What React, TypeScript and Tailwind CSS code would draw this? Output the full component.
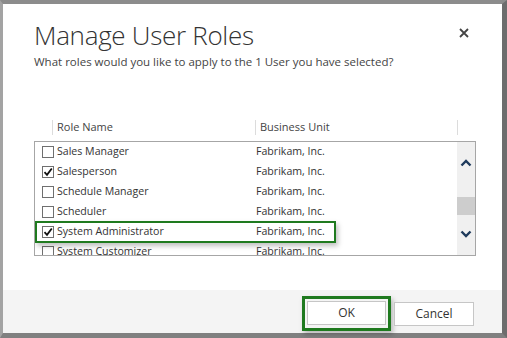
import React from 'react';

const rows = [
    { name: 'Sales Manager', unit: 'Fabrikam, Inc.', checked: false },
    { name: 'Salesperson', unit: 'Fabrikam, Inc.', checked: true },
    { name: 'Schedule Manager', unit: 'Fabrikam, Inc.', checked: false },
    { name: 'Scheduler', unit: 'Fabrikam, Inc.', checked: false },
    { name: 'System Administrator', unit: 'Fabrikam, Inc.', checked: true },
    { name: 'System Customizer', unit: 'Fabrikam, Inc.', checked: false },
];

const Check = ({ checked }: { checked: boolean }) => (
    <span className="w-[12px] h-[12px] border border-[#6f6f6f] bg-white flex items-center justify-center shrink-0">
        {checked && (
            <svg width="10" height="10" viewBox="0 0 10 10">
                <path d="M1.5 5.2 L4 7.8 L8.8 1.5" fill="none" stroke="#111" strokeWidth="1.8" />
            </svg>
        )}
    </span>
);

const App = () => {
    return (
        <div className="w-[507px] h-[338px] bg-[#8a8a8a] border-l-[3px] border-l-[#a3a3a3] border-t-[4px] border-t-[#8c8c8c] border-r-[5px] border-r-[#6d6d6d] border-b-[5px] border-b-[#808080] font-['Open_Sans',sans-serif] text-[#333]">
            <div className="h-full bg-white flex flex-col">
                <div className="flex justify-between pl-[31px] pr-[33px] pt-[13px]">
                    <div>
                        <h1 className="text-[26px] leading-[36px] font-light text-[#333] tracking-[-0.3px]">Manage User Roles</h1>
                        <p className="text-[11.5px] leading-[16px] text-[#444] mt-[1px]">What roles would you like to apply to the 1 User you have selected?</p>
                    </div>
                    <svg width="10" height="10" viewBox="0 0 10 10" className="mt-[11px]">
                        <path d="M1 1 L9 9 M9 1 L1 9" stroke="#444" strokeWidth="1.8" />
                    </svg>
                </div>

                <div className="ml-[31px] w-[442px] mt-[50px]">
                    <div className="flex h-[15px] items-center text-[11px] text-[#444]">
                        <span className="w-[18px]"></span>
                        <span className="w-[203px] h-full border-l border-[#dcdcdc] pl-[4px] flex items-center">Role Name</span>
                        <span className="w-[202px] h-full border-l border-[#dcdcdc] pl-[4px] flex items-center">Business Unit</span>
                        <span className="h-full border-l border-[#dcdcdc]"></span>
                    </div>
                    <div className="mt-[6px] h-[115px] border border-[#a6a6a6] flex overflow-hidden">
                        <div className="relative flex-1">
                            {rows.map((r) => (
                                <div key={r.name} className="flex items-center h-[20px] text-[10.6px] text-[#333]">
                                    <span className="w-[22px] flex justify-end pr-[3px]">
                                        <Check checked={r.checked} />
                                    </span>
                                    <span className="w-[199px] whitespace-nowrap">{r.name}</span>
                                    <span className="whitespace-nowrap">{r.unit}</span>
                                </div>
                            ))}
                            <div className="absolute left-0 top-[79px] w-[301px] h-[22px] border-2 border-[#1f7a1f] shadow-[2px_3px_5px_rgba(0,0,0,0.25)]"></div>
                        </div>
                        <div className="w-[18px] bg-[#f0f0f0] flex flex-col items-center">
                            <svg width="12" height="8" viewBox="0 0 12 8" className="mt-[17px]">
                                <path d="M1.5 6.5 L6 2 L10.5 6.5" fill="none" stroke="#1e3a5c" strokeWidth="2.4" />
                            </svg>
                            <div className="w-full h-[18px] bg-[#cdcdcd] mt-[30px]"></div>
                            <svg width="12" height="8" viewBox="0 0 12 8" className="mt-[15px]">
                                <path d="M1.5 1.5 L6 6 L10.5 1.5" fill="none" stroke="#1e3a5c" strokeWidth="2.4" />
                            </svg>
                        </div>
                    </div>
                </div>

                <div className="flex-1"></div>

                <div className="h-[43px] bg-[#f4f4f4] flex justify-end items-center pt-[4px] pr-[28px] gap-[3px]">
                    <div className="border-[3px] border-[#1f7a1f] pt-[2px] pb-[3px] px-[2px] shadow-[2px_3px_5px_rgba(0,0,0,0.25)]">
                        <button className="block w-[79px] h-[24px] bg-white border border-[#c6c6c6] text-[12px] text-[#333]">OK</button>
                    </div>
                    <button className="w-[80px] h-[24px] bg-white border border-[#c6c6c6] text-[12px] text-[#333]">Cancel</button>
                </div>
            </div>
        </div>
    );
};

export default App;
